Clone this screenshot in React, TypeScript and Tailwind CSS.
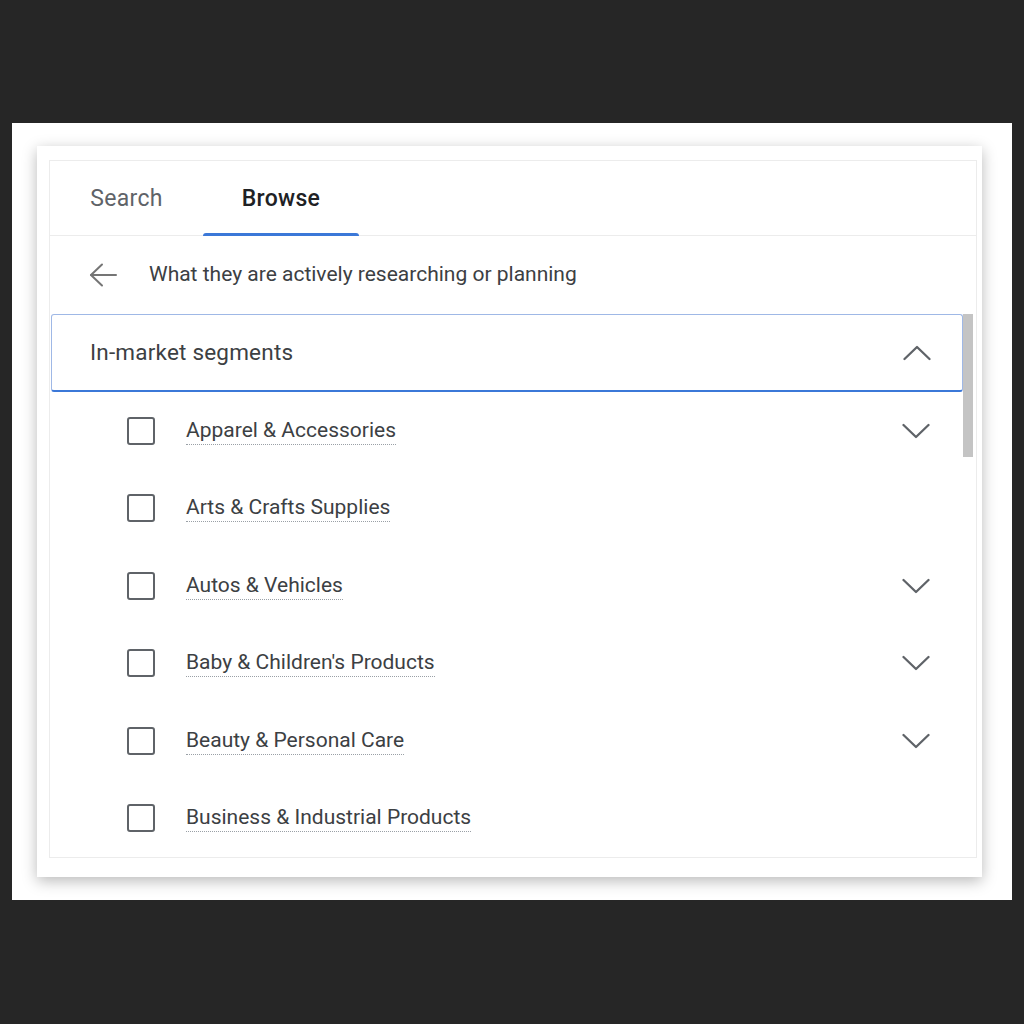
const segments = [
  { name: "Apparel & Accessories", expandable: true },
  { name: "Arts & Crafts Supplies", expandable: false },
  { name: "Autos & Vehicles", expandable: true },
  { name: "Baby & Children's Products", expandable: true },
  { name: "Beauty & Personal Care", expandable: true },
  { name: "Business & Industrial Products", expandable: false },
];

function Chevron({ up = false }: { up?: boolean }) {
  return (
    <svg width="28" height="16" viewBox="0 0 28 16" fill="none" stroke="#5f6368" strokeWidth="2.3" strokeLinecap="round" strokeLinejoin="round">
      {up ? <polyline points="1.5,14 14,2 26.5,14" /> : <polyline points="1.5,2 14,14 26.5,2" />}
    </svg>
  );
}

function SegmentRow({ name, expandable }: { name: string; expandable: boolean }) {
  return (
    <div className="flex h-[77.5px] items-center">
      <div className="ml-[77px] h-[28px] w-[28px] rounded-[3px] border-2 border-[#5f6368]" />
      <span className="ml-[31px] border-b border-dotted border-[#9aa0a6] pb-[1px] text-[21px] leading-[26px] text-[#3c4043]">
        {name}
      </span>
      <div className="flex-1" />
      {expandable && (
        <div className="mr-[46px]">
          <Chevron />
        </div>
      )}
    </div>
  );
}

export default function App() {
  return (
    <div
      className="h-[1024px] w-[1024px] bg-[#262626] pt-[123px] pl-[12px]"
      style={{ fontFamily: "Roboto, 'Liberation Sans', sans-serif" }}
    >
      <div className="h-[777px] w-[1000px] bg-white pt-[23px] pl-[25px]">
        <div className="h-[731px] w-[945px] bg-white pt-[14px] pl-[12px] shadow-[0_4px_14px_rgba(0,0,0,0.28)]">
          <div className="flex h-[698px] w-[928px] flex-col overflow-hidden border border-[#ececec]">
            {/* tabs */}
            <div className="flex h-[77px] border-b border-[#ececec]">
              <div className="flex w-[153px] items-center justify-center pt-[2px] text-[23px] tracking-[0.3px] text-[#5f6368]">
                Search
              </div>
              <div className="relative flex w-[156px] items-center justify-center pt-[2px] text-[23px] font-medium tracking-[0.3px] text-[#202124]">
                Browse
                <div className="absolute bottom-[-1px] left-0 right-0 h-[3px] rounded-t-sm bg-[#3b78d8]" />
              </div>
            </div>

            {/* back row */}
            <div className="flex h-[81px] items-center">
              <svg className="ml-[39px]" width="28" height="24" viewBox="0 0 28 24" fill="none" stroke="#757575" strokeWidth="2" strokeLinecap="round" strokeLinejoin="round">
                <line x1="2" y1="12" x2="27" y2="12" />
                <polyline points="13,1.5 2,12 13,22.5" />
              </svg>
              <span className="ml-[32px] text-[21px] text-[#3c4043]">
                What they are actively researching or planning
              </span>
            </div>

            {/* list */}
            <div className="relative flex-1">
              <div className="ml-[1px] flex h-[78px] w-[912px] items-center rounded-[3px] border border-b-2 border-[#9fb8e6] border-b-[#3b78d8]">
                <span className="ml-[38px] text-[22.5px] tracking-[0.2px] text-[#3c4043]">In-market segments</span>
                <div className="flex-1" />
                <div className="mr-[31px]">
                  <Chevron up />
                </div>
              </div>
              {segments.map((s) => (
                <SegmentRow key={s.name} name={s.name} expandable={s.expandable} />
              ))}
              <div className="absolute right-[3px] top-0 h-[143px] w-[10px] bg-[#c4c4c4]" />
            </div>
          </div>
        </div>
      </div>
    </div>
  );
}
